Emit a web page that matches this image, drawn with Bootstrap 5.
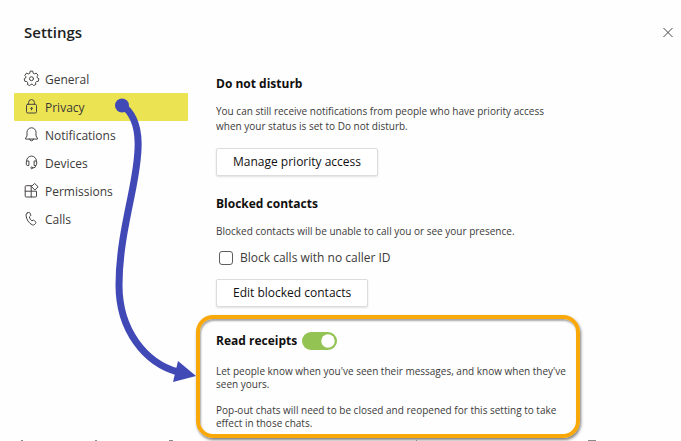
<!DOCTYPE html>
<html lang="en">
<head>
<meta charset="utf-8">
<meta name="viewport" content="width=device-width, initial-scale=1">
<title>Settings</title>
<link href="https://cdn.jsdelivr.net/npm/bootstrap@5.3.0/dist/css/bootstrap.min.css" rel="stylesheet">
<style>
  body { font-family: "Open Sans", "Noto Sans", sans-serif; font-size: 12px; line-height: 20px; color: #3b3a39; background: #fefefe; overflow: hidden; }
  .top-bar { padding: 20px 8px 20px 24px; }
  .top-bar h1 { font-size: 15px; line-height: 25px; font-weight: 600; color: #201f1e; }
  .close-btn { width: 10px; height: 10px; }
  .side-menu { width: 174px; margin-left: 14px; margin-right: 8px; }
  .side-menu .nav-link { height: 28px; padding: 1px 9px 0; gap: 5px; color: #3b3a39; border-radius: 1px; }
  .side-menu .nav-link.active { background: #ece352; }
  .side-menu svg { width: 17px; height: 17px; margin-bottom: 2px; }
  .line-icon { fill: none; stroke: #484644; stroke-width: 1; stroke-linecap: round; stroke-linejoin: round; }
  .pane { padding-top: 10px; }
  .setting { max-width: 384px; padding: 0 20px; }
  .setting h2 { font-size: 12px; line-height: 18px; font-weight: 700; color: #11100f; margin-bottom: 11px; }
  .setting p { font-size: 10px; line-height: 15px; margin: 0; }
  .setting .btn { height: 28px; padding: 0 16px; font-size: 12px; line-height: 24px; font-weight: 500; color: #11100f; background: #fff; border: 1px solid #dedcda; border-radius: 2px; box-shadow: 0 1px 2px rgba(0,0,0,.12); }
  .disturb { margin-bottom: 19px; }
  .disturb p { margin-bottom: 14px; }
  .blocked { margin-bottom: 8px; }
  .blocked p { margin-bottom: 9px; }
  .check-row { gap: 7px; padding-left: 3px; margin-bottom: 11px; }
  .check-row .form-check-input { width: 14px; height: 14px; margin: 0; border: 1px solid #605e5c; border-radius: 3px; }
  .receipts { padding: 13px 8px 4px 16px; border: 4px solid #f8a809; border-radius: 17px; box-shadow: 1px 2px 3px rgba(0,0,0,.5), inset 1px 2px 2px rgba(0,0,0,.35); }
  .receipts h2 { margin: 0; }
  .receipts p { line-height: 13px; }
  .receipts p + p { margin-top: 13px; }
  .receipts .head-row { gap: 5px; margin-bottom: 15px; }
  .receipts .form-switch { min-height: 0; padding: 0; margin: 0; height: 18px; }
  .receipts .form-switch .form-check-input { width: 35px; height: 18px; margin: 0; float: none; display: block; border: 0; background-color: #92c353; }
  .arrow { left: 0; top: 0; width: 210px; height: 400px; pointer-events: none; }
  .edge-marks { height: 1px; width: 100%; }
</style>
<script src="https://cdn.jsdelivr.net/npm/bootstrap@5.3.0/dist/js/bootstrap.bundle.min.js"></script>
</head>
<body class="position-relative min-vh-100 d-flex flex-column">
<header class="top-bar d-flex align-items-center justify-content-between">
  <h1 class="m-0">Settings</h1>
  <button type="button" class="close-btn btn p-0 border-0 d-flex" aria-label="Close">
    <svg class="line-icon" width="10" height="10" viewBox="0 0 10 10"><path d="M.7 .2 9.3 8.8M9.3 .2.7 8.8"/></svg>
  </button>
</header>
<main class="d-flex align-items-start">
  <nav class="side-menu nav flex-column flex-shrink-0" aria-label="Settings sections">
    <a class="nav-link d-flex align-items-center" href="#general">
      <svg class="line-icon" viewBox="0 0 17 17"><path d="M7.1 1.5 6.7 3.4 5.2 4 3.6 3 1.8 5.4 2.9 6.8 2.7 8 1.2 8.8 1.9 11.4 3.8 11.5 4.8 12.8 4.4 14.5 6.8 15.6 8 14.2H9.3L10.6 15.6 12.9 14.4 12.5 12.7 13.5 11.5 15.3 11.3 15.9 8.7 14.4 7.9 14.1 6.7 15 5.1 13.2 3.1 11.6 3.9 10.2 3.3 9.8 1.5Z"/><circle cx="8.5" cy="8.7" r="2"/></svg>
      General</a>
    <a class="nav-link active d-flex align-items-center" href="#privacy" aria-current="page">
      <svg class="line-icon" viewBox="0 0 17 17"><rect x="3.5" y="6.3" width="10" height="8.7" rx="1.2"/><path d="M5.6 6.3V4.5a2.9 2.9 0 0 1 5.8 0v1.8"/><circle cx="8.5" cy="10.3" r=".7" fill="#484644"/><path d="M8.5 10.3v1.5"/></svg>
      Privacy</a>
    <a class="nav-link d-flex align-items-center" href="#notifications">
      <svg class="line-icon" viewBox="0 0 17 17"><path d="M2.6 12.7V12.1L4 10V6.3a4.500 4.500 0 0 1 9 0v3.7L14.400 12.100v.6ZM6.600 12.900a1.900 1.900 0 0 0 3.800 0"/></svg>
      Notifications</a>
    <a class="nav-link d-flex align-items-center" href="#devices">
      <svg class="line-icon" viewBox="0 0 17 17"><path d="M3.6 7.500V7a4.900 4.900 0 0 1 9.800 0v.5M5.500 7H4.200a.9.9 0 0 0-.9.9v2.300a1.300 1.300 0 0 0 1.300 1.300h.9ZM11.500 7h1.300a.9.9 0 0 1 .9.9v2.300a1.300 1.300 0 0 1-1.300 1.300h-.9ZM12.600 11.500v.4a1.800 1.800 0 0 1-1.800 1.800H9.600"/><circle cx="8.700" cy="13.800" r=".9"/></svg>
      Devices</a>
    <a class="nav-link d-flex align-items-center" href="#permissions">
      <svg class="line-icon" viewBox="0 0 17 17"><path d="M8.200 3.700H3.200a1 1 0 0 0-1 1v9.300a1 1 0 0 0 1 1h9.300a1 1 0 0 0 1-1V9.200H2.200M8.200 3.700v11.300M11.900 1.700 15.100 4.800 11.900 8 8.700 4.800Z"/></svg>
      Permissions</a>
    <a class="nav-link d-flex align-items-center" href="#calls">
      <svg class="line-icon" viewBox="0 0 17 17"><path d="M4.200 3 5.700 2.400a1 1 0 0 1 1.200.5L7.700 4.900a1 1 0 0 1-.3 1.100L6.300 7a7.500 7.500 0 0 0 2.500 3.800l1.400-.6a1 1 0 0 1 1.100.3l1.400 1.600a1 1 0 0 1 0 1.200l-1 1.100a2.200 2.200 0 0 1-2.300.5C6 13.500 3.200 9.400 3 5A2.200 2.200 0 0 1 4.200 3Z"/></svg>
      Calls</a>
  </nav>
  <div class="pane flex-grow-1">
    <section class="setting disturb">
      <h2>Do not disturb</h2>
      <p>You can still receive notifications from people who have priority access when your status is set to Do not disturb.</p>
      <button type="button" class="btn">Manage priority access</button>
    </section>
    <section class="setting blocked">
      <h2>Blocked contacts</h2>
      <p>Blocked contacts will be unable to call you or see your presence.</p>
      <div class="check-row d-flex align-items-center">
        <input class="form-check-input" type="checkbox" id="noCaller">
        <label for="noCaller">Block calls with no caller ID</label>
      </div>
      <button type="button" class="btn">Edit blocked contacts</button>
    </section>
    <section class="setting receipts">
      <div class="head-row d-flex align-items-center">
        <h2><label for="readReceipts">Read receipts</label></h2>
        <div class="form-check form-switch"><input class="form-check-input" type="checkbox" role="switch" id="readReceipts" checked></div>
      </div>
      <p>Let people know when you've seen their messages, and know when they've seen yours.</p>
      <p>Pop-out chats will need to be closed and reopened for this setting to take effect in those chats.</p>
    </section>
  </div>
</main>
<svg class="edge-marks mt-auto" viewBox="0 0 681 1" preserveAspectRatio="xMinYMin slice" aria-hidden="true">
  <path d="M21 .5h2M95 .5h2M169 .5h4M416 .5h1M588 .5h8" stroke="#8a8a8a"/>
</svg>
<svg class="arrow position-absolute" viewBox="0 0 210 400" aria-hidden="true">
  <path d="M122 105C145 121 139 158 131 197C125 226 119 255 119 285C119 330 145 363 178 372" fill="none" stroke="#4149b6" stroke-width="7"/>
  <circle cx="122" cy="105.500" r="7" fill="#4149b6"/>
  <path d="M178 361 196 376 173 382Z" fill="#4149b6"/>
</svg>
</body>
</html>
